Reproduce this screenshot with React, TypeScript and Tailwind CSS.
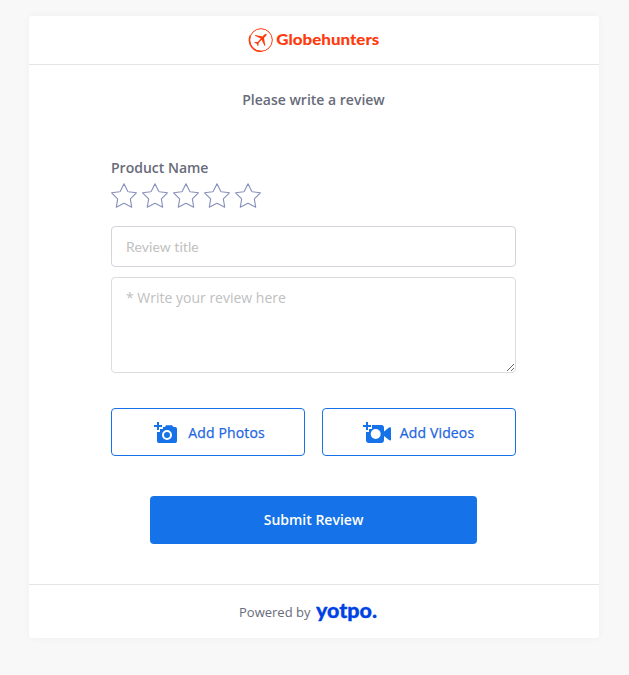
import React from "react";

function BrandLogo() {
  return (
    <svg width="132" height="26" viewBox="0 0 132 26" role="img" aria-label="Globehunters">
      <g stroke="#ff3a0c" fill="none">
        <ellipse cx="13" cy="13" rx="11.3" ry="11.3" strokeWidth="1" />
        <path d="M2.3 8.5A11.5 11.4 0 0 0 14 24.4" strokeWidth="1.3" />
      </g>
      <path
        d="M18.6 6.8C17.4 6.6 16.1 7.7 14.6 9.4L7.4 8L6.9 8.7L12.8 11.6L9.7 15L6.8 14.9L6.3 15.6L8.8 16.8L9.8 19.2L10.5 18.6L10.6 16L13.6 12.8L16.6 19L17.3 18.4L16 10.9C17.8 9.2 19.1 8 18.6 6.8Z"
        fill="#ff3a0c"
      />
      <text
        x="28.3"
        y="17.8"
        fill="#ff3a0c"
        className="font-['Lato',sans-serif] text-[15.5px] font-black"
        textLength="103"
        lengthAdjust="spacingAndGlyphs"
      >
        Globehunters
      </text>
    </svg>
  );
}

function Star() {
  return (
    <svg width="26" height="26" viewBox="0 0 26 26" fill="none" stroke="#8790bb" strokeWidth="1.1" strokeLinejoin="round">
      <path d="M13 .7L16.7 8.3Q16.9 8.7 17.4 8.8L25.4 9.8L19.6 15.6Q19.3 15.9 19.4 16.4L20.7 24.2L13.6 20.5Q13 20.2 12.4 20.5L5.3 24.2L6.6 16.4Q6.7 15.9 6.4 15.6L.6 9.8L8.6 8.8Q9.1 8.7 9.3 8.3Z" />
    </svg>
  );
}

function PhotoIcon() {
  return (
    <svg width="24" height="24" viewBox="0 0 24 24" className="mt-0.5">
      <path
        d="M9 5H11L12 3.2H18L19.5 5H21.2Q23 5 23 6.8V19.2Q23 21 21.2 21H4.8Q3 21 3 19.2V10H6V7H9Z"
        fill="#1572e8"
      />
      <circle cx="13" cy="13" r="4" fill="none" stroke="#fff" strokeWidth="2" />
      <path d="M4 0V8M0 4H8" stroke="#1572e8" strokeWidth="2" />
    </svg>
  );
}

function VideoIcon() {
  return (
    <svg width="28" height="24" viewBox="0 0 28 24" className="mt-0.5">
      <path
        d="M9 3H18.5Q21 3 21 6V9.5L26 5.5Q28 4.8 28 6.5V17.5Q28 19 26 18L21 14V18Q21 21 18 21H6Q3 21 3 18V10H6V7H9Z"
        fill="#1572e8"
      />
      <circle cx="12.7" cy="12" r="5" fill="#fff" />
      <path d="M4 0V8M0 4H8" stroke="#1572e8" strokeWidth="2" />
    </svg>
  );
}

function YotpoLogo() {
  return (
    <svg width="76" height="28" viewBox="0 0 76 28" role="img" aria-label="yotpo.">
      <text
        x="0"
        y="18.5"
        fill="#0042e4"
        stroke="#0042e4"
        strokeWidth=".3"
        className="font-['Lato',sans-serif] text-[20px] font-black"
        textLength="61"
        lengthAdjust="spacingAndGlyphs"
      >
        yotpo.
      </text>
    </svg>
  );
}

const uploadButton =
  "flex h-12 w-[194px] items-center justify-center rounded-[4px] border border-[#1572e8] bg-white pt-0.5 text-sm font-medium tracking-[0.15px] text-[#1c65e3] [-webkit-text-stroke:0.25px_#1c65e3]";

export default function App() {
  return (
    <main className="h-[675px] w-full overflow-hidden bg-[#f8f8f8] pt-4 pl-[29px] font-['Open_Sans','Noto_Sans',sans-serif] text-[#686b79]">
      <section className="flex h-[622px] w-[570px] flex-col rounded-[3px] bg-white shadow-[0_0_8px_rgba(0,0,0,0.04)]">
        <header className="flex h-[49px] shrink-0 items-center justify-center border-b border-[#e5e5e8]">
          <BrandLogo />
        </header>
        <h1 className="mt-[25px] pr-px text-center text-sm leading-5 font-semibold">Please write a review</h1>
        <form className="ml-[82px] flex w-[405px] flex-col pt-12" onSubmit={(e) => e.preventDefault()}>
          <p className="text-sm leading-5 font-semibold">Product Name</p>
          <div className="mt-[5px] flex h-[26px] gap-[5px]">
            {[1, 2, 3, 4, 5].map((n) => (
              <Star key={n} />
            ))}
          </div>
          <input
            aria-label="Review title"
            placeholder="Review title"
            className="mt-[17px] h-[41px] rounded-[4px] border border-[#d3d4dc] px-3.5 font-['Lato',sans-serif] text-sm tracking-[0.08px] placeholder:text-[#c0c0c0]"
          />
          <textarea
            aria-label="Write your review here"
            placeholder="* Write your review here"
            className="mt-2.5 h-24 rounded-[4px] border border-[#dcdce0] px-3.5 py-2.5 text-sm leading-5 placeholder:text-[#c0c0c0]"
          />
          <div className="mt-[35px] flex justify-between">
            <button type="button" className={`${uploadButton} gap-2.5 pl-[3px]`}>
              <PhotoIcon />
              Add Photos
            </button>
            <button type="button" className={`${uploadButton} gap-[9px] pr-px`}>
              <VideoIcon />
              Add Videos
            </button>
          </div>
          <button type="submit" className="mt-10 ml-[39px] h-12 w-[327px] rounded-[4px] bg-[#1572e8] text-sm font-semibold text-white">
            Submit Review
          </button>
        </form>
        <footer className="mt-auto flex h-[54px] items-center gap-1.5 border-t border-[#e5e5e8] pt-0.5 pl-[210px] text-[13px]">
          Powered by
          <YotpoLogo />
        </footer>
      </section>
    </main>
  );
}
